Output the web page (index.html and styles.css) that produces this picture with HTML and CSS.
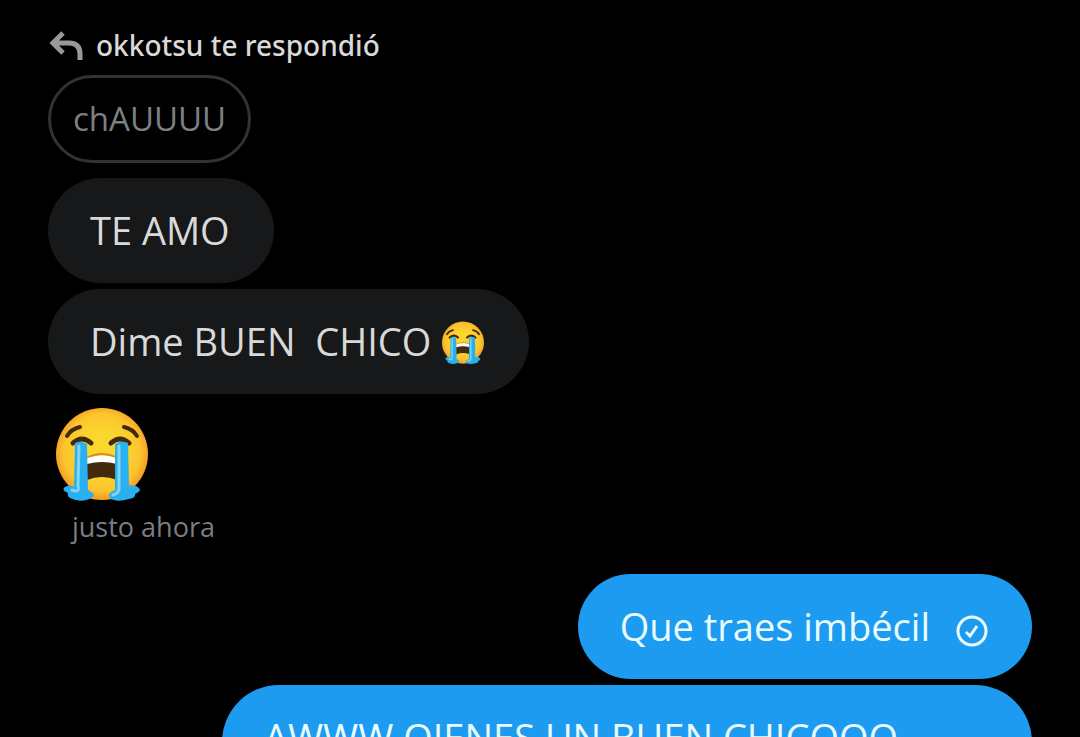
FILE: index.html
```html
<!DOCTYPE html>
<html lang="es">
<head>
    <meta charset="UTF-8">
    <meta name="viewport" content="width=device-width, initial-scale=1.0">
    <title>Mensajes</title>
    <link rel="stylesheet" href="styles.css">
</head>
<body>

    <!-- Shared crying face -->
    <svg class="defs" aria-hidden="true">
        <defs>
            <radialGradient id="face" cx="50%" cy="48%" r="52%">
                <stop offset="0.4" stop-color="#fbd72e"/>
                <stop offset="0.8" stop-color="#fbc52d"/>
                <stop offset="1" stop-color="#f29a24"/>
            </radialGradient>
            <symbol id="sob" viewBox="0 0 96 96">
                <circle cx="48" cy="47" r="46" fill="url(#face)"/>
                <path d="M33 54Q48 48 63 54V73Q48 67 33 73Z" fill="#422b0d"/>
                <path d="M33 51Q48 43 63 51" fill="none" stroke="#d98c1c" stroke-width="2"/>
                <path d="M33 51Q48 46 63 51V57Q48 53 33 57Z" fill="#fff"/>
                <path d="M13 29Q17 22 26 20M83 29Q79 22 70 20" fill="none" stroke="#422b0d" stroke-width="4" stroke-linecap="round"/>
                <path d="M19 36Q28 28 37 36M57 36Q66 28 75 36" fill="none" stroke="#422b0d" stroke-width="5" stroke-linecap="round"/>
                <path d="M21 36Q27 33 33 37L34 83Q42 87 39 90Q28 97 16 91Q13 89 14 86Q7 83 11 80Q15 77 20 80Z" fill="#29b0f0"/>
                <path d="M61 37Q67 33 74 36L75 79Q81 77 85 81Q88 84 81 87Q82 91 75 92Q62 96 56 91Q52 87 61 83Z" fill="#29b0f0"/>
                <path d="M25 39L24 79Q26 86 18 83M65 39V79Q66 86 59 88" fill="none" stroke="#81d4fa" stroke-width="3" stroke-linecap="round"/>
            </symbol>
        </defs>
    </svg>

    <main class="chat">
        <div class="reply-header">
            <svg class="reply-icon" viewBox="0 0 36 32" aria-hidden="true">
                <path d="M15 4L5 14L15 24M5 14H21Q32 14 32 25V31"/>
            </svg>
            <span>okkotsu te respondió</span>
        </div>
        <div class="quote">chAUUUU</div>

        <div class="bubble received">TE AMO</div>
        <div class="bubble received">Dime BUEN&nbsp; CHICO <svg class="emoji" role="img" aria-label="😭"><use href="#sob"/></svg></div>
        <svg class="big-emoji" role="img" aria-label="😭"><use href="#sob"/></svg>
        <div class="time">justo ahora</div>

        <div class="bubble sent">
            <span>Que traes imbécil</span>
            <svg class="check" viewBox="0 0 32 32" role="img" aria-label="Enviado">
                <circle cx="16" cy="16" r="14"/>
                <path d="M10 17L14 21L21 11"/>
            </svg>
        </div>
        <div class="bubble sent long">AWWW QIENES UN BUEN CHICOOO</div>
    </main>

</body>
</html>
```

FILE: styles.css
```css
* {
    margin: 0;
    padding: 0;
    box-sizing: border-box;
}

body {
    background-color: #000;
    color: #d9d9d9;
    font-family: "Open Sans", "Noto Sans", sans-serif;
    height: 100vh;
    overflow: hidden;
}

.defs {
    position: absolute;
    width: 0;
    height: 0;
}

.chat {
    display: flex;
    flex-direction: column;
    align-items: flex-start;
    padding: 27px 48px 0;
}

/* Reply */
.reply-header {
    display: flex;
    align-items: center;
    gap: 12px;
    padding-bottom: 12px;
    font-family: "Noto Sans", sans-serif;
    font-size: 28px;
    font-weight: 500;
    line-height: 36px;
}

.reply-icon {
    width: 36px;
    height: 32px;
    fill: none;
    stroke: #999;
    stroke-width: 5;
}

.quote {
    padding: 20px 22px;
    margin-bottom: 15px;
    border: 3px solid #2f3336;
    border-radius: 44px;
    color: #7b8085;
    font-size: 33px;
    line-height: 42px;
}

/* Messages */
.bubble {
    padding: 28px 44px 28px 42px;
    margin-bottom: 6px;
    border-radius: 57px;
    font-size: 38px;
    line-height: 49px;
}

.received {
    background-color: #16181a;
}

.sent {
    display: flex;
    align-items: center;
    gap: 26px;
    align-self: flex-end;
    background-color: #1d9bf0;
    color: #e8fbff;
}

.long {
    align-items: flex-start;
    width: 75vw;
    min-height: 154px;
}

.emoji {
    width: 44px;
    height: 44px;
    vertical-align: -9px;
}

.big-emoji {
    width: 96px;
    height: 96px;
    margin: 7px 6px;
}

.time {
    padding: 0 24px;
    margin-bottom: 30px;
    color: #7b7e84;
    font-size: 27px;
    line-height: 34px;
}

.check {
    width: 32px;
    height: 32px;
    margin-top: 8px;
    fill: none;
    stroke: #e8fbff;
    stroke-width: 3;
}
```
